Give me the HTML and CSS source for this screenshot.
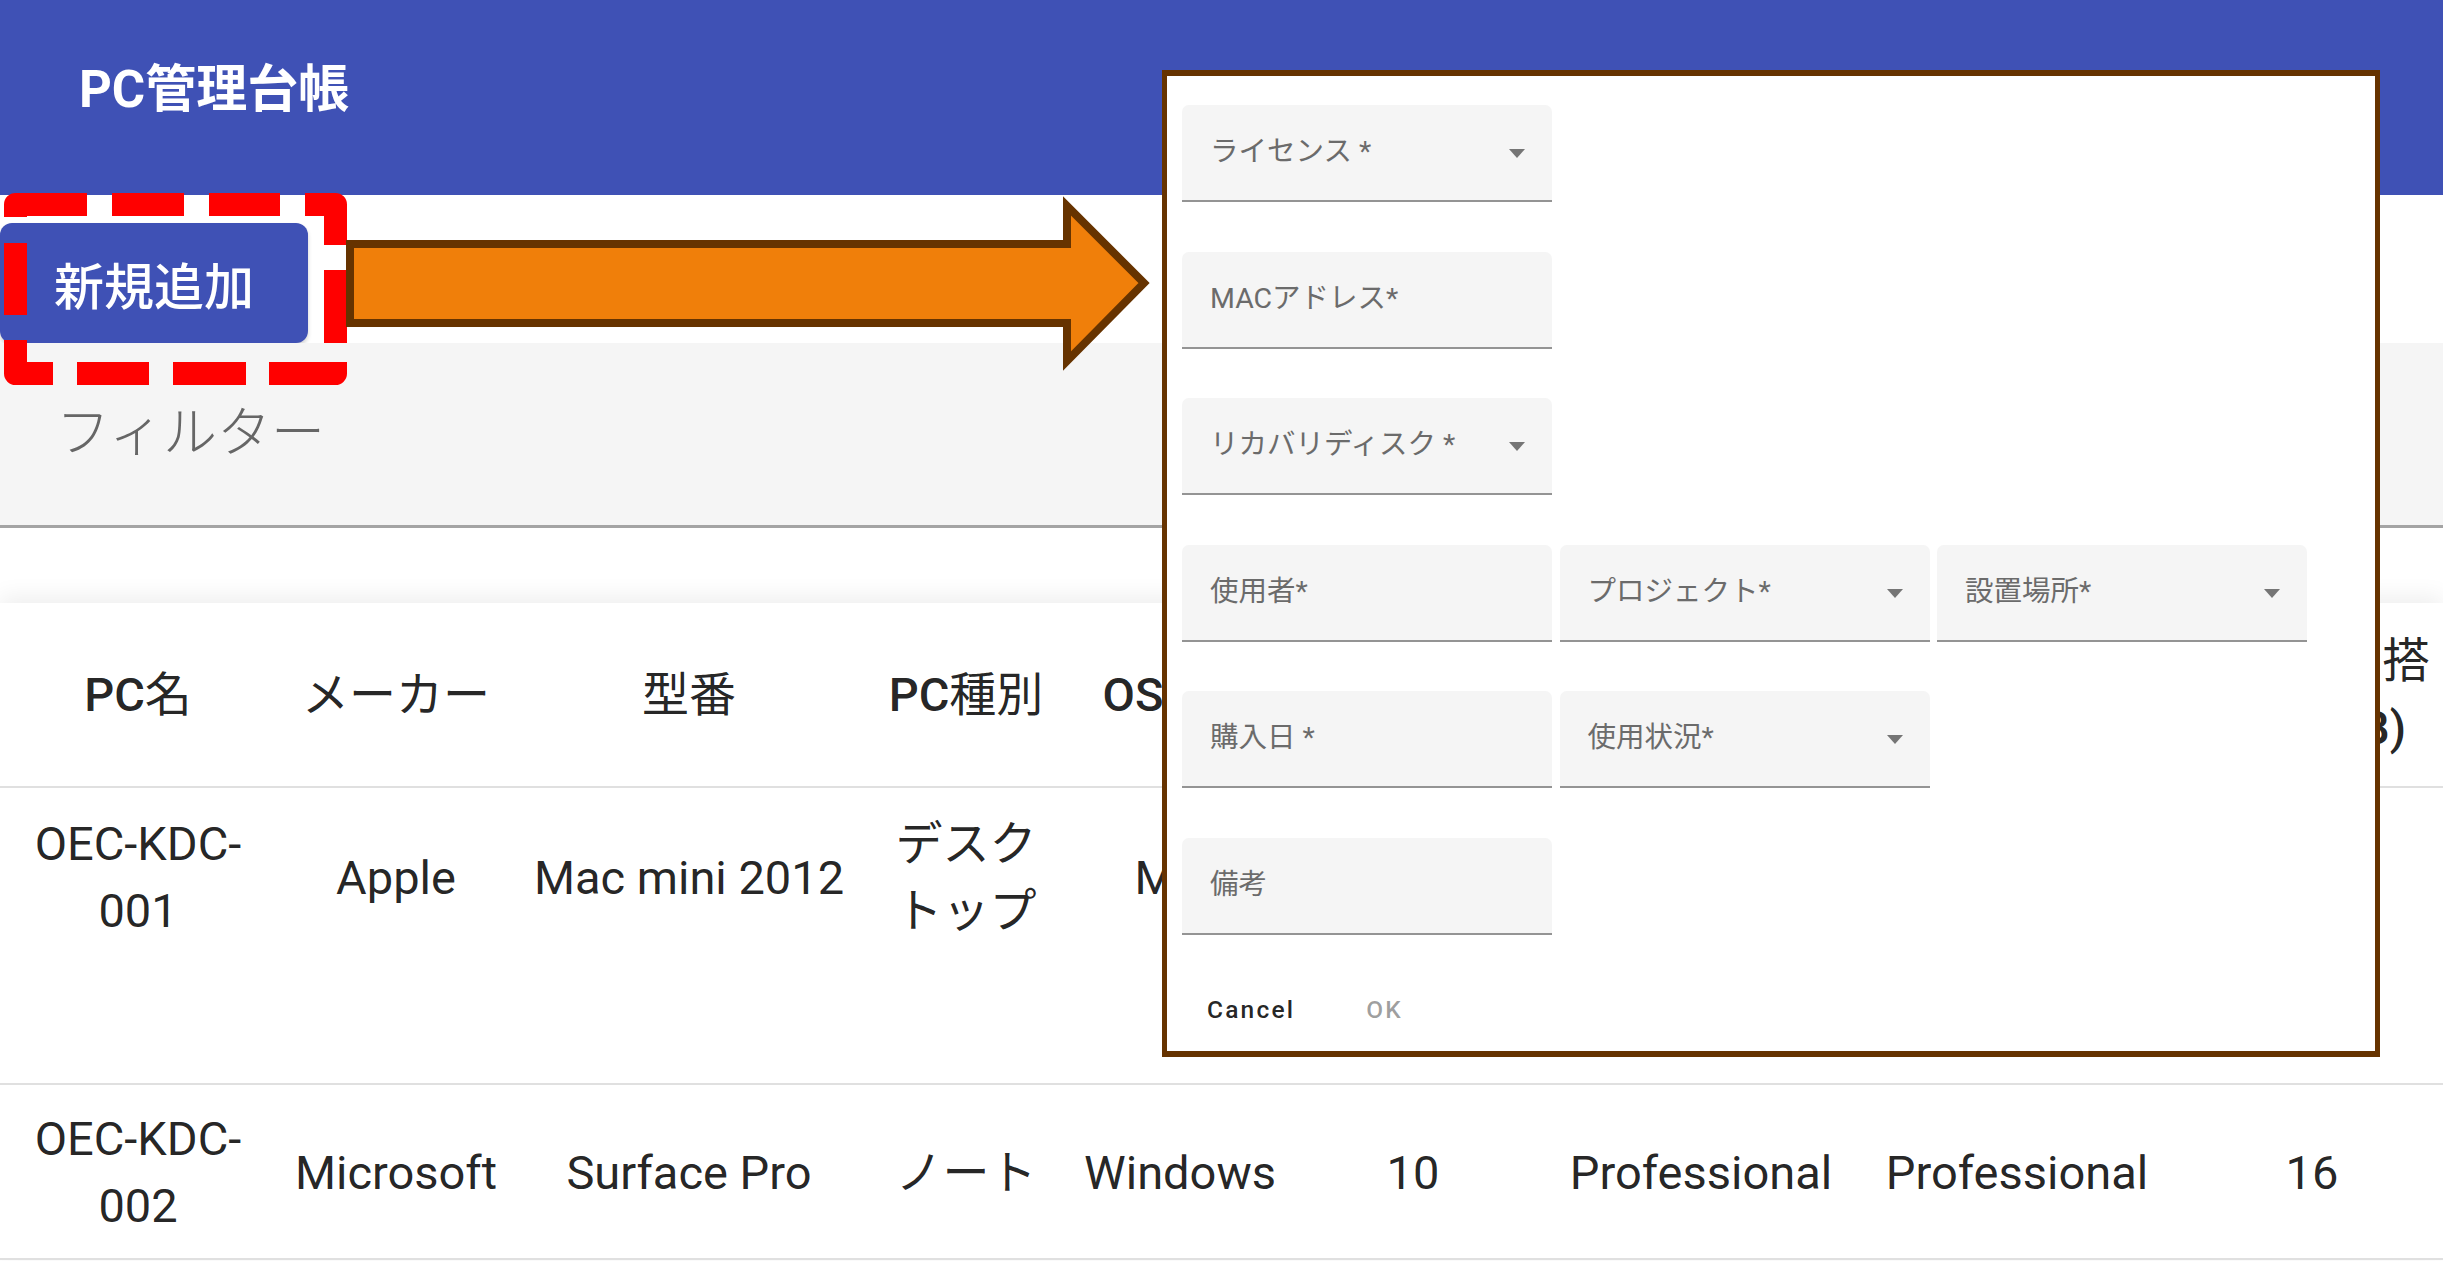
FILE: index.html
```html
<!DOCTYPE html>
<html lang="ja">
<head>
<meta charset="utf-8">
<title>PC管理台帳</title>
<link rel="stylesheet" href="styles.css">
</head>
<body>
<header class="appbar">
  <h1 class="appbar-title">PC管理台帳</h1>
</header>
<div class="toolbar">
  <button class="btn-add">新規追加</button>
</div>
<section class="filter">
  <span class="filter-title">フィルター</span>
</section>
<div class="table-card">
  <table class="pc-table">
    <colgroup>
      <col class="c1"><col class="c2"><col class="c3"><col class="c4"><col class="c5"><col class="c6"><col class="c7"><col class="c8"><col class="c9">
    </colgroup>
    <thead>
      <tr>
        <th><span class="latin">PC</span>名</th>
        <th>メーカー</th>
        <th>型番</th>
        <th><span class="latin">PC</span>種別</th>
        <th><span class="latin">OS</span>種別</th>
        <th><span class="latin">OS</span>バージョン</th>
        <th><span class="latin">OS</span>エディション</th>
        <th><span class="latin">Office</span>エディション</th>
        <th>メモリー搭<br>載量<span class="latin">(GB)</span></th>
      </tr>
    </thead>
    <tbody>
      <tr class="row-tall">
        <td>OEC-KDC-001</td>
        <td>Apple</td>
        <td>Mac mini 2012</td>
        <td>デスク<br>トップ</td>
        <td>Mac</td>
        <td>10.14</td>
        <td>-</td>
        <td>Professional</td>
        <td>8</td>
      </tr>
      <tr class="row">
        <td>OEC-KDC-002</td>
        <td>Microsoft</td>
        <td>Surface Pro</td>
        <td>ノート</td>
        <td>Windows</td>
        <td>10</td>
        <td>Professional</td>
        <td>Professional</td>
        <td>16</td>
      </tr>
    </tbody>
  </table>
</div>

<svg class="annot-rect" width="360" height="400" viewBox="0 0 360 400" aria-hidden="true">
  <path d="M15.5 217 V204.5 H335.5 V373.5 H15.5 Z" fill="none" stroke="#ff0000" stroke-width="23" stroke-linejoin="round" stroke-dasharray="84 25 72 25 71 25 71 25 73 19 78 23 73 24 72 24 71 25 72 26"/>
</svg>
<svg class="annot-arrow" width="1160" height="380" viewBox="0 0 1160 380" aria-hidden="true">
  <polygon points="350,244 1067,244 1067,206 1144,283 1067,361 1067,323 350,323" fill="#f07f0a" stroke="#663300" stroke-width="8"/>
</svg>

<div class="dialog">
  <div class="form-grid">
    <div class="field select"><span class="label">ライセンス *</span><span class="caret"></span></div>
    <div class="field full-row"><span class="label">MACアドレス*</span></div>
    <div class="field select full-row"><span class="label">リカバリディスク *</span><span class="caret"></span></div>
    <div class="field row-start"><span class="label">使用者*</span></div>
    <div class="field select"><span class="label">プロジェクト*</span><span class="caret"></span></div>
    <div class="field select"><span class="label">設置場所*</span><span class="caret"></span></div>
    <div class="field row-start"><span class="label">購入日 *</span></div>
    <div class="field select"><span class="label">使用状況*</span><span class="caret"></span></div>
    <div class="field row-start"><span class="label">備考</span></div>
  </div>
  <div class="actions">
    <button class="btn-text btn-cancel">Cancel</button>
    <button class="btn-text btn-ok">OK</button>
  </div>
</div>
</body>
</html>
```

FILE: styles.css
```css
* { box-sizing: border-box; }

html, body {
  margin: 0;
  padding: 0;
}

body {
  width: 2443px;
  height: 1261px;
  overflow: hidden;
  position: relative;
  background: #ffffff;
  color: rgba(0, 0, 0, 0.87);
  font-family: Roboto, "Noto Sans CJK JP", sans-serif;
}

/* App bar */
.appbar {
  height: 195px;
  background: #3f51b5;
  padding: 64px 0 0 79px;
}

.appbar-title {
  margin: 0;
  font-size: 51px;
  line-height: 51px;
  font-weight: 700;
  color: #ffffff;
  font-family: Roboto, "Noto Sans CJK JP", sans-serif;
}

/* Toolbar with add button */
.toolbar {
  height: 148px;
  padding-top: 28px;
}

.btn-add {
  display: block;
  width: 308px;
  height: 120px;
  margin: 0;
  padding: 0;
  border: 0;
  border-radius: 12px;
  background: #3f51b5;
  color: #ffffff;
  font-family: Roboto, "Noto Sans CJK JP", sans-serif;
  font-size: 50px;
  font-weight: 500;
  box-shadow: 0 3px 4px rgba(0, 0, 0, 0.18);
}

/* Filter panel */
.filter {
  height: 185px;
  background: #f5f5f5;
  border-bottom: 3px solid #a4a4a4;
  display: flex;
  align-items: center;
  padding-left: 56px;
}

.filter-title {
  font-size: 54px;
  font-weight: 300;
  color: #666666;
  line-height: 1;
}

/* Table */
.table-card {
  margin-top: 75px;
  width: 2443px;
  overflow: hidden;
  background: #ffffff;
  box-shadow: 0 -6px 22px rgba(0, 0, 0, 0.07);
}

.pc-table {
  width: 2456px;
  table-layout: fixed;
  border-collapse: collapse;
  font-size: 47px;
  line-height: 67px;
}

.c1 { width: 276px; }
.c2 { width: 240px; }
.c3 { width: 346px; }
.c4 { width: 208px; }
.c5 { width: 220px; }
.c6 { width: 246px; }
.c7 { width: 330px; }
.c8 { width: 302px; }
.c9 { width: 288px; }

.pc-table th {
  padding: 24px 12px 25px;
  font-weight: 400;
  text-align: center;
  vertical-align: middle;
  border-bottom: 2px solid #e0e0e0;
  color: rgba(0, 0, 0, 0.87);
}

.pc-table th .latin {
  font-weight: 500;
}

.pc-table td {
  padding: 20px 12px 19px;
  text-align: center;
  vertical-align: middle;
  border-bottom: 2px solid #e0e0e0;
  font-weight: 400;
  color: rgba(0, 0, 0, 0.87);
}

.pc-table .row-tall td {
  padding-top: 22px;
  padding-bottom: 139px;
}

/* Annotations */
.annot-rect {
  position: absolute;
  left: 0;
  top: 0;
}

.annot-arrow {
  position: absolute;
  left: 0;
  top: 0;
}

/* Dialog */
.dialog {
  position: absolute;
  left: 1162px;
  top: 70px;
  width: 1218px;
  height: 987px;
  background: #ffffff;
  border: 5px solid #663300;
  border-top-width: 6px;
  border-bottom-width: 6px;
  padding: 29px 0 0 15px;
}

.form-grid {
  display: grid;
  grid-template-columns: 370px 370px 370px;
  column-gap: 7.5px;
  row-gap: 49.5px;
}

.field {
  height: 97px;
  background: #f5f5f5;
  border-bottom: 2px solid #949494;
  border-radius: 7px 7px 0 0;
  display: flex;
  align-items: center;
  justify-content: space-between;
  padding: 0 27px 0 28px;
}

.full-row { grid-column: 1; }
.row-start { grid-column: 1; }

.label {
  font-size: 28.5px;
  color: #6b6b6b;
  line-height: 1;
  white-space: nowrap;
  font-family: Roboto, "Noto Sans CJK JP", sans-serif;
}

.caret {
  width: 0;
  height: 0;
  border-left: 8.5px solid transparent;
  border-right: 8.5px solid transparent;
  border-top: 9px solid #757575;
  margin-top: 2px;
}

.actions {
  display: flex;
  gap: 43px;
  margin-top: 43px;
  padding-left: 11px;
}

.btn-text {
  height: 64px;
  padding: 0 14px;
  border: 0;
  background: transparent;
  font-family: Roboto, sans-serif;
  font-size: 24.5px;
  font-weight: 500;
  letter-spacing: 2.2px;
  line-height: 64px;
}

.btn-cancel { color: rgba(0, 0, 0, 0.87); }
.btn-ok { color: rgba(0, 0, 0, 0.38); }
```
